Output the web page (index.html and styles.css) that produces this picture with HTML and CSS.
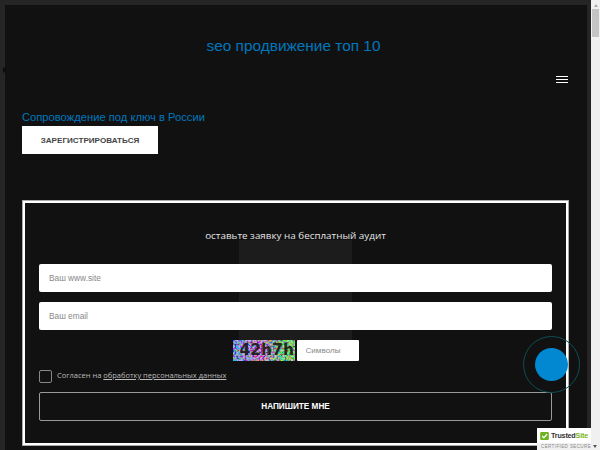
FILE: index.html
```html
<!DOCTYPE html>
<html lang="ru">

<head>
  <meta charset="UTF-8" />
  <title>seo продвижение топ 10</title>
  <link rel="stylesheet" href="styles.css">
</head>

<body>
  <div class="page">
    <div class="site">
      <span class="slide-arrow"></span>
      <div class="w">
        <h1 class="title">seo продвижение топ 10</h1>
        <!-- меню -->
        <div class="nav">
          <button class="burger" aria-label="меню"><span></span><span></span><span></span></button>
        </div>
        <p class="lead">Сопровождение под ключ в России</p>
        <a class="reg" href="#">ЗАРЕГИСТРИРОВАТЬСЯ</a>

        <!-- форма заявки -->
        <form class="audit">
          <div class="audit-shade"></div>
          <h2 class="audit-title">оставьте заявку на бесплатный аудит</h2>
          <input class="field" type="text" placeholder="Ваш www.site" />
          <input class="field" type="text" placeholder="Ваш email" />
          <div class="captcha">
            <div class="captcha-img">
              <svg width="62" height="21" viewBox="0 0 62 21">
                <defs>
                  <filter id="noise" x="0" y="0" width="100%" height="100%" color-interpolation-filters="sRGB">
                    <feTurbulence type="fractalNoise" baseFrequency="0.5" numOctaves="2" seed="7" />
                    <feColorMatrix values="6 0 0 0 -2.3  0 6 0 0 -2.3  0 0 6 0 -2.3  0 0 0 0 1" />
                  </filter>
                  <linearGradient id="tint">
                    <stop offset="0" stop-color="#2a7cff" />
                    <stop offset="0.45" stop-color="#e040d0" />
                    <stop offset="0.75" stop-color="#40d070" />
                    <stop offset="1" stop-color="#60e040" />
                  </linearGradient>
                </defs>
                <rect width="62" height="21" filter="url(#noise)" />
                <rect width="62" height="21" fill="url(#tint)" opacity="0.5" />
              </svg>
              <span class="captcha-code">42h7h</span>
            </div>
            <input class="captcha-input" type="text" placeholder="Символы" />
          </div>
          <label class="agree">
            <span class="check"></span>
            <span class="agree-text">Согласен на <a href="#">обработку персональных данных</a></span>
          </label>
          <button class="send" type="button">НАПИШИТЕ МНЕ</button>
        </form>
      </div>
    </div>
    <!-- полоса прокрутки -->
    <div class="scroll">
      <span class="scroll-up"></span>
      <span class="scroll-thumb"></span>
    </div>
  </div>

  <div class="call"><span></span></div>

  <div class="trusted">
    <div class="trusted-top">
      <svg width="9" height="8" viewBox="0 0 13 12">
        <rect width="13" height="12" rx="1.5" fill="#6cb31f" />
        <path d="M3 6l2.6 2.8L10.5 3" fill="none" stroke="#fff" stroke-width="2" />
      </svg>
      <span class="trusted-name">Trusted<b>Site</b></span>
    </div>
    <div class="trusted-sub"><span>CERTIFIED SECURE</span><i></i></div>
  </div>
</body>

</html>
```

FILE: styles.css
```css
* {
  margin: 0;
  padding: 0;
  box-sizing: border-box;
}

html,
body {
  height: 100%;
  overflow: hidden;
}

body {
  font-family: "Liberation Sans", Arial, sans-serif;
  background: #f0f0f0;
}

.page {
  display: flex;
  height: 450px;
}

.site {
  position: relative;
  flex: 1;
  background: #252525;
  padding: 5px 4px 0 5px;
}

.slide-arrow {
  position: absolute;
  left: 3px;
  top: 67px;
  border: 3px solid transparent;
  border-left: 4px solid #0c0c0c;
  border-right: none;
}

.w {
  height: 100%;
  background: #111;
  padding: 0 18px 0 17px;
}

.title {
  padding-top: 31px;
  padding-right: 4px;
  font-size: 15.4px;
  line-height: 19px;
  font-weight: normal;
  text-align: center;
  color: #0077bd;
}

.nav {
  display: flex;
  justify-content: flex-end;
  margin-top: 21px;
  padding-right: 1px;
}

.burger {
  display: flex;
  flex-direction: column;
  gap: 2px;
  width: 12px;
  height: 7px;
  background: none;
  border: none;
}

.burger span {
  flex: none;
  height: 1px;
  background: #fff;
}

.lead {
  margin-top: 27px;
  font-size: 11.2px;
  line-height: 15px;
  color: #0077bd;
}

.reg {
  display: flex;
  align-items: center;
  justify-content: center;
  width: 136px;
  height: 28px;
  margin-top: 1px;
  background: #fff;
  color: #444;
  font-size: 8.1px;
  font-weight: bold;
  text-decoration: none;
}

.audit {
  position: relative;
  display: flex;
  flex-direction: column;
  margin-top: 46px;
  width: 547px;
  height: 246px;
  padding: 25px 16px 0;
  border: 1px solid #aaa;
  box-shadow: inset 0 0 0 2px #fff;
}

.audit-shade {
  position: absolute;
  left: 216px;
  top: 39px;
  width: 113px;
  height: 100px;
  background: #1c1c1c;
}

.audit-title {
  position: relative;
  margin-top: 1px;
  margin-bottom: 21px;
  font-family: "Open Sans", sans-serif;
  font-size: 9.85px;
  line-height: 16px;
  font-weight: normal;
  text-align: center;
  color: #e4e4e4;
}

.field {
  position: relative;
  width: 513px;
  height: 28px;
  margin-bottom: 10px;
  padding-left: 10px;
  border: none;
  border-radius: 2px;
  background: #fff;
  font-family: "Liberation Sans", sans-serif;
  font-size: 8.3px;
}

.field::placeholder,
.captcha-input::placeholder {
  color: #888;
}

.captcha {
  position: relative;
  display: flex;
  justify-content: center;
  gap: 2px;
  height: 21px;
}

.captcha-img {
  position: relative;
  width: 62px;
  height: 21px;
  overflow: hidden;
}

.captcha-code {
  position: absolute;
  left: 7px;
  top: 0;
  font-family: "DejaVu Sans", sans-serif;
  font-size: 15.5px;
  line-height: 21px;
  font-weight: bold;
  color: rgba(20, 20, 20, 0.9);
}

.captcha-input {
  width: 62px;
  height: 21px;
  padding-left: 9px;
  border: none;
  border-radius: 1px;
  background: #fff;
  font-family: "Liberation Sans", sans-serif;
  font-size: 8.1px;
}

.agree {
  display: flex;
  align-items: center;
  gap: 5px;
  margin-top: 9px;
  height: 13px;
  font-family: "Open Sans", sans-serif;
  font-size: 7.5px;
  color: #bbb;
}

.agree-text {
  margin-bottom: 3px;
}

.agree a {
  color: #bbb;
}

.check {
  width: 13px;
  height: 13px;
  border: 1px solid #888;
  border-radius: 2px;
}

.send {
  width: 513px;
  height: 29px;
  margin-top: 9px;
  background: none;
  border: 1px solid #999;
  border-radius: 2px;
  color: #fff;
  font-family: "Liberation Sans", sans-serif;
  font-size: 8.2px;
  font-weight: bold;
}

.scroll {
  width: 9px;
  background: #f0f0f0;
  display: flex;
  flex-direction: column;
  align-items: center;
}

.scroll-up {
  margin-top: 4px;
  border: 2px solid transparent;
  border-bottom: 3px solid #aaa;
  border-top: none;
}

.scroll-thumb {
  width: 7px;
  height: 28px;
  margin-top: 2px;
  background: #c4c4c4;
}

.call {
  position: fixed;
  left: 523px;
  top: 336px;
  width: 57px;
  height: 57px;
  border: 1px solid #0d4f55;
  border-radius: 50%;
  display: flex;
  align-items: center;
  justify-content: center;
}

.call span {
  width: 33px;
  height: 33px;
  border-radius: 50%;
  background: #0288d1;
}

.trusted {
  position: fixed;
  left: 537px;
  top: 428px;
  width: 63px;
  height: 22px;
  background: #f0f0f0;
}

.trusted-top {
  display: flex;
  align-items: center;
  gap: 2px;
  width: 54px;
  height: 15px;
  padding-left: 3px;
  background: #fff;
}

.trusted-name {
  font-size: 7.2px;
  font-weight: bold;
  letter-spacing: -0.2px;
  color: #333;
}

.trusted-name b {
  color: #7ab51d;
}

.trusted-sub {
  display: flex;
  align-items: center;
  justify-content: space-between;
  padding: 0 3px 0 4px;
  font-size: 4.5px;
  letter-spacing: 0.4px;
  line-height: 7px;
  white-space: nowrap;
  color: #888;
}

.trusted-sub i {
  border: 2px solid transparent;
  border-top: 3px solid #555;
  border-bottom: none;
}
```
